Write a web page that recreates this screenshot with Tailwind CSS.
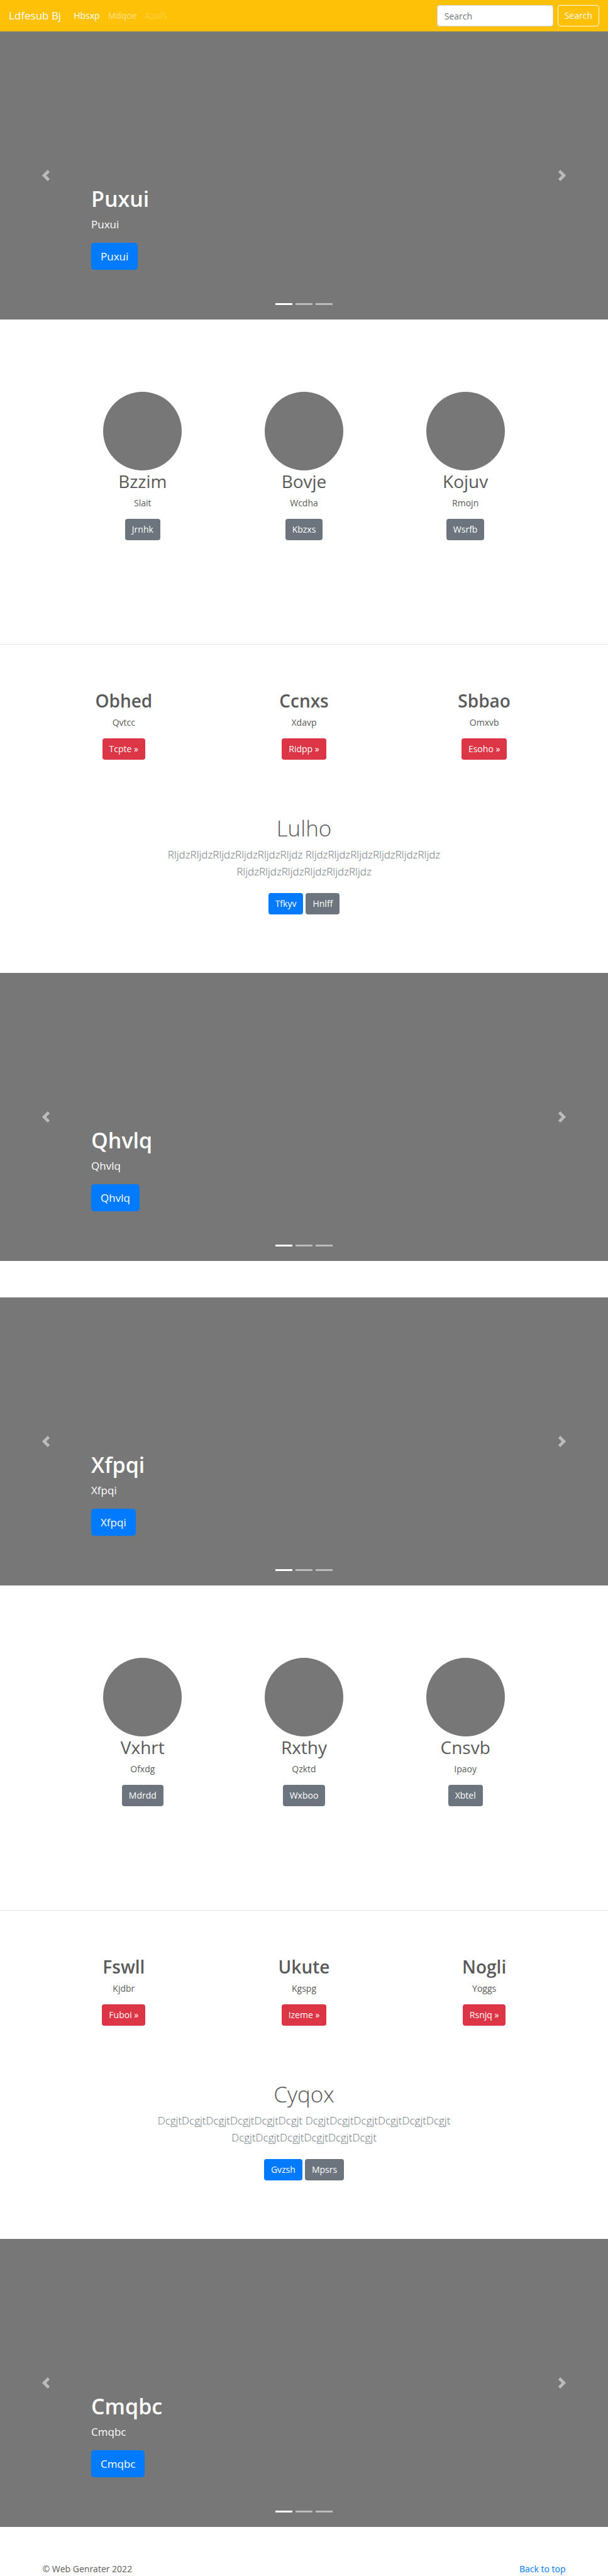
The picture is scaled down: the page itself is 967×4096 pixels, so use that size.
<!DOCTYPE html>
<html lang="en">
<head>
<meta charset="utf-8">
<meta name="viewport" content="width=device-width, initial-scale=1">
<title>Ldfesub Bj</title>
<script src="https://cdn.jsdelivr.net/npm/@tailwindcss/browser@4"></script>
</head>
<body class="bg-white font-['Open_Sans','Noto_Sans',sans-serif] text-[14px] leading-[22px] text-[#5a5a5a]">

<header>
  <nav class="flex h-[50px] items-center bg-[#ffc107] px-3.5 text-white">
    <a href="#" class="mr-5 text-[17px] leading-[26px]">Ldfesub Bj</a>
    <ul class="mr-auto flex gap-[13px]">
      <li><a href="#" class="text-white">Hbsxp</a></li>
      <li><a href="#" class="text-white/50">Mdqoe</a></li>
      <li><a href="#" class="text-white/25" aria-disabled="true">Azufs</a></li>
    </ul>
    <form class="flex gap-[7px]">
      <input type="search" placeholder="Search" aria-label="Search" class="h-[34px] w-[185px] rounded border border-[#ced4da] bg-white px-[11px] text-[#495057] placeholder:text-[#6c757d]">
      <button type="button" class="h-[34px] rounded border border-[#f8f9fa] px-[10px] text-[#f8f9fa]">Search</button>
    </form>
  </nav>
</header>

<main>
  <section class="relative flex h-[458px] flex-col items-start justify-end bg-[#777] px-[15%] pb-[79px] text-white">
    <h1 class="mb-[5px] text-[34px] leading-[43px] font-semibold">Puxui</h1>
    <p class="mb-4 text-[17px] leading-[27px]">Puxui</p>
    <a href="#" class="rounded-[5px] bg-[#007bff] px-[15px] py-2 text-[17px] leading-[27px]">Puxui</a>
    <button type="button" aria-label="Previous" class="absolute inset-y-0 left-0 flex w-[15%] items-center justify-center opacity-50"><svg class="size-[18px]" viewBox="0 0 8 8" fill="#fff"><path d="M5.25 0l-4 4 4 4 1.5-1.5-2.5-2.5 2.5-2.5-1.5-1.5z"/></svg></button>
    <button type="button" aria-label="Next" class="absolute inset-y-0 right-0 flex w-[15%] items-center justify-center opacity-50"><svg class="size-[18px]" viewBox="0 0 8 8" fill="#fff"><path d="M2.75 0l-1.5 1.5 2.5 2.5-2.5 2.5 1.5 1.5 4-4-4-4z"/></svg></button>
    <ol class="absolute inset-x-0 bottom-[23px] flex justify-center gap-[5px]">
      <li class="h-[3px] w-[27px] bg-white"></li><li class="h-[3px] w-[27px] bg-white/50"></li><li class="h-[3px] w-[27px] bg-white/50"></li>
    </ol>
  </section>

  <section class="mx-auto grid max-w-[770px] grid-cols-3 pt-[115px] pb-[165px] text-center">
    <div class="flex flex-col items-center">
      <div class="size-[125px] rounded-full bg-[#777]"></div>
      <h2 class="mb-[7px] text-[28px] leading-[34px]">Bzzim</h2>
      <p class="mb-3.5">Slait</p>
      <a href="#" class="rounded bg-[#6c757d] px-[11px] py-1.5 text-white">Jrnhk</a>
    </div>
    <div class="flex flex-col items-center">
      <div class="size-[125px] rounded-full bg-[#777]"></div>
      <h2 class="mb-[7px] text-[28px] leading-[34px]">Bovje</h2>
      <p class="mb-3.5">Wcdha</p>
      <a href="#" class="rounded bg-[#6c757d] px-[11px] py-1.5 text-white">Kbzxs</a>
    </div>
    <div class="flex flex-col items-center">
      <div class="size-[125px] rounded-full bg-[#777]"></div>
      <h2 class="mb-[7px] text-[28px] leading-[34px]">Kojuv</h2>
      <p class="mb-3.5">Rmojn</p>
      <a href="#" class="rounded bg-[#6c757d] px-[11px] py-1.5 text-white">Wsrfb</a>
    </div>
  </section>

  <hr class="border-black/10">

  <section class="mx-auto grid max-w-[860px] grid-cols-3 pt-[72px] text-center">
    <div class="flex flex-col items-center">
      <h2 class="mb-[7px] text-[28px] leading-[34px] font-semibold">Obhed</h2>
      <p class="mb-3.5">Qvtcc</p>
      <a href="#" class="rounded bg-[#dc3545] px-[11px] py-1.5 text-white">Tcpte »</a>
    </div>
    <div class="flex flex-col items-center">
      <h2 class="mb-[7px] text-[28px] leading-[34px] font-semibold">Ccnxs</h2>
      <p class="mb-3.5">Xdavp</p>
      <a href="#" class="rounded bg-[#dc3545] px-[11px] py-1.5 text-white">Ridpp »</a>
    </div>
    <div class="flex flex-col items-center">
      <h2 class="mb-[7px] text-[28px] leading-[34px] font-semibold">Sbbao</h2>
      <p class="mb-3.5">Omxvb</p>
      <a href="#" class="rounded bg-[#dc3545] px-[11px] py-1.5 text-white">Esoho »</a>
    </div>
  </section>

  <section class="mx-auto max-w-[537px] pt-[87px] pb-[93px] text-center">
    <h2 class="mb-[7px] text-[35px] leading-[43px] font-light">Lulho</h2>
    <p class="mb-[21px] text-[17px] leading-[27px] font-light text-[#6c757d]">RljdzRljdzRljdzRljdzRljdzRljdz RljdzRljdzRljdzRljdzRljdzRljdz RljdzRljdzRljdzRljdzRljdzRljdz</p>
    <div class="flex justify-center gap-1 text-white">
      <a href="#" class="rounded bg-[#007bff] px-[11px] py-1.5">Tfkyv</a>
      <a href="#" class="rounded bg-[#6c757d] px-[11px] py-1.5">Hnlff</a>
    </div>
  </section>

  <section class="relative mb-[58px] flex h-[458px] flex-col items-start justify-end bg-[#777] px-[15%] pb-[79px] text-white">
    <h1 class="mb-[5px] text-[34px] leading-[43px] font-semibold">Qhvlq</h1>
    <p class="mb-4 text-[17px] leading-[27px]">Qhvlq</p>
    <a href="#" class="rounded-[5px] bg-[#007bff] px-[15px] py-2 text-[17px] leading-[27px]">Qhvlq</a>
    <button type="button" aria-label="Previous" class="absolute inset-y-0 left-0 flex w-[15%] items-center justify-center opacity-50"><svg class="size-[18px]" viewBox="0 0 8 8" fill="#fff"><path d="M5.25 0l-4 4 4 4 1.5-1.5-2.5-2.5 2.5-2.5-1.5-1.5z"/></svg></button>
    <button type="button" aria-label="Next" class="absolute inset-y-0 right-0 flex w-[15%] items-center justify-center opacity-50"><svg class="size-[18px]" viewBox="0 0 8 8" fill="#fff"><path d="M2.75 0l-1.5 1.5 2.5 2.5-2.5 2.5 1.5 1.5 4-4-4-4z"/></svg></button>
    <ol class="absolute inset-x-0 bottom-[23px] flex justify-center gap-[5px]">
      <li class="h-[3px] w-[27px] bg-white"></li><li class="h-[3px] w-[27px] bg-white/50"></li><li class="h-[3px] w-[27px] bg-white/50"></li>
    </ol>
  </section>

  <section class="relative flex h-[458px] flex-col items-start justify-end bg-[#777] px-[15%] pb-[79px] text-white">
    <h1 class="mb-[5px] text-[34px] leading-[43px] font-semibold">Xfpqi</h1>
    <p class="mb-4 text-[17px] leading-[27px]">Xfpqi</p>
    <a href="#" class="rounded-[5px] bg-[#007bff] px-[15px] py-2 text-[17px] leading-[27px]">Xfpqi</a>
    <button type="button" aria-label="Previous" class="absolute inset-y-0 left-0 flex w-[15%] items-center justify-center opacity-50"><svg class="size-[18px]" viewBox="0 0 8 8" fill="#fff"><path d="M5.25 0l-4 4 4 4 1.5-1.5-2.5-2.5 2.5-2.5-1.5-1.5z"/></svg></button>
    <button type="button" aria-label="Next" class="absolute inset-y-0 right-0 flex w-[15%] items-center justify-center opacity-50"><svg class="size-[18px]" viewBox="0 0 8 8" fill="#fff"><path d="M2.75 0l-1.5 1.5 2.5 2.5-2.5 2.5 1.5 1.5 4-4-4-4z"/></svg></button>
    <ol class="absolute inset-x-0 bottom-[23px] flex justify-center gap-[5px]">
      <li class="h-[3px] w-[27px] bg-white"></li><li class="h-[3px] w-[27px] bg-white/50"></li><li class="h-[3px] w-[27px] bg-white/50"></li>
    </ol>
  </section>

  <section class="mx-auto grid max-w-[770px] grid-cols-3 pt-[115px] pb-[165px] text-center">
    <div class="flex flex-col items-center">
      <div class="size-[125px] rounded-full bg-[#777]"></div>
      <h2 class="mb-[7px] text-[28px] leading-[34px]">Vxhrt</h2>
      <p class="mb-3.5">Ofxdg</p>
      <a href="#" class="rounded bg-[#6c757d] px-[11px] py-1.5 text-white">Mdrdd</a>
    </div>
    <div class="flex flex-col items-center">
      <div class="size-[125px] rounded-full bg-[#777]"></div>
      <h2 class="mb-[7px] text-[28px] leading-[34px]">Rxthy</h2>
      <p class="mb-3.5">Qzktd</p>
      <a href="#" class="rounded bg-[#6c757d] px-[11px] py-1.5 text-white">Wxboo</a>
    </div>
    <div class="flex flex-col items-center">
      <div class="size-[125px] rounded-full bg-[#777]"></div>
      <h2 class="mb-[7px] text-[28px] leading-[34px]">Cnsvb</h2>
      <p class="mb-3.5">Ipaoy</p>
      <a href="#" class="rounded bg-[#6c757d] px-[11px] py-1.5 text-white">Xbtel</a>
    </div>
  </section>

  <hr class="border-black/10">

  <section class="mx-auto grid max-w-[860px] grid-cols-3 pt-[72px] text-center">
    <div class="flex flex-col items-center">
      <h2 class="mb-[7px] text-[28px] leading-[34px] font-semibold">Fswll</h2>
      <p class="mb-3.5">Kjdbr</p>
      <a href="#" class="rounded bg-[#dc3545] px-[11px] py-1.5 text-white">Fuboi »</a>
    </div>
    <div class="flex flex-col items-center">
      <h2 class="mb-[7px] text-[28px] leading-[34px] font-semibold">Ukute</h2>
      <p class="mb-3.5">Kgspg</p>
      <a href="#" class="rounded bg-[#dc3545] px-[11px] py-1.5 text-white">Izeme »</a>
    </div>
    <div class="flex flex-col items-center">
      <h2 class="mb-[7px] text-[28px] leading-[34px] font-semibold">Nogli</h2>
      <p class="mb-3.5">Yoggs</p>
      <a href="#" class="rounded bg-[#dc3545] px-[11px] py-1.5 text-white">Rsnjq »</a>
    </div>
  </section>

  <section class="mx-auto max-w-[537px] pt-[87px] pb-[93px] text-center">
    <h2 class="mb-[7px] text-[35px] leading-[43px] font-light">Cyqox</h2>
    <p class="mb-[21px] text-[17px] leading-[27px] font-light text-[#6c757d]">DcgjtDcgjtDcgjtDcgjtDcgjtDcgjt DcgjtDcgjtDcgjtDcgjtDcgjtDcgjt DcgjtDcgjtDcgjtDcgjtDcgjtDcgjt</p>
    <div class="flex justify-center gap-1 text-white">
      <a href="#" class="rounded bg-[#007bff] px-[11px] py-1.5">Gvzsh</a>
      <a href="#" class="rounded bg-[#6c757d] px-[11px] py-1.5">Mpsrs</a>
    </div>
  </section>

  <section class="relative flex h-[458px] flex-col items-start justify-end bg-[#777] px-[15%] pb-[79px] text-white">
    <h1 class="mb-[5px] text-[34px] leading-[43px] font-semibold">Cmqbc</h1>
    <p class="mb-4 text-[17px] leading-[27px]">Cmqbc</p>
    <a href="#" class="rounded-[5px] bg-[#007bff] px-[15px] py-2 text-[17px] leading-[27px]">Cmqbc</a>
    <button type="button" aria-label="Previous" class="absolute inset-y-0 left-0 flex w-[15%] items-center justify-center opacity-50"><svg class="size-[18px]" viewBox="0 0 8 8" fill="#fff"><path d="M5.25 0l-4 4 4 4 1.5-1.5-2.5-2.5 2.5-2.5-1.5-1.5z"/></svg></button>
    <button type="button" aria-label="Next" class="absolute inset-y-0 right-0 flex w-[15%] items-center justify-center opacity-50"><svg class="size-[18px]" viewBox="0 0 8 8" fill="#fff"><path d="M2.75 0l-1.5 1.5 2.5 2.5-2.5 2.5 1.5 1.5 4-4-4-4z"/></svg></button>
    <ol class="absolute inset-x-0 bottom-[23px] flex justify-center gap-[5px]">
      <li class="h-[3px] w-[27px] bg-white"></li><li class="h-[3px] w-[27px] bg-white/50"></li><li class="h-[3px] w-[27px] bg-white/50"></li>
    </ol>
  </section>
</main>

<footer class="mx-auto flex max-w-[832px] justify-between pt-14">
  <p>© Web Genrater 2022</p>
  <a href="#" class="text-[#007bff]">Back to top</a>
</footer>

</body>
</html>
